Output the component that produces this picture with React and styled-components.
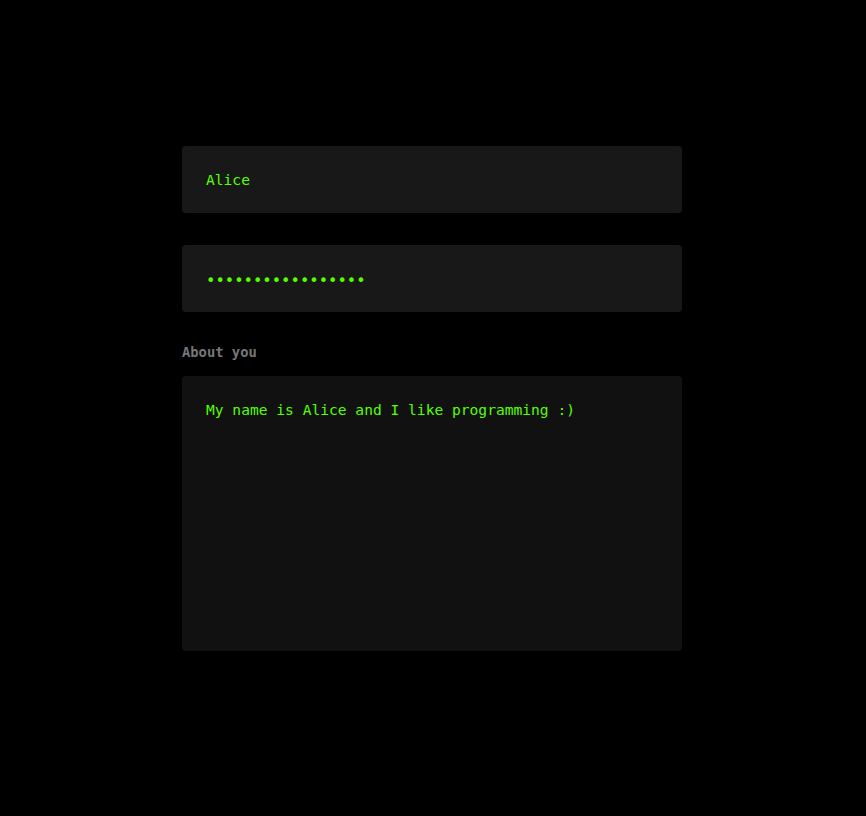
import React, { useState } from "react";
import styled, { createGlobalStyle } from "styled-components";

const GlobalStyle = createGlobalStyle`
  html, body {
    margin: 0;
    padding: 0;
    background-color: #000;
  }
`;

const Page = styled.div`
  min-height: 816px;
  background-color: #000;
  padding: 146px 2px 0 0;
  box-sizing: border-box;
`;

const Form = styled.form`
  width: 500px;
  margin: 0 auto;
  display: flex;
  flex-direction: column;
`;

const Field = styled.input`
  box-sizing: border-box;
  width: 100%;
  height: 67px;
  padding: ${(p) => (p.$secret ? "4px 24px 0" : "0 24px")};
  margin-bottom: ${(p) => p.$gap || 0}px;
  border: none;
  border-radius: 4px;
  outline: none;
  background-color: #181818;
  color: #55ff00;
  font-family: "DejaVu Sans Mono", monospace;
  font-size: ${(p) => (p.$secret ? 15.6 : 14.6)}px;
`;

const Label = styled.label`
  margin: 31px 0 15px;
  color: #777;
  font-family: "DejaVu Sans Mono", monospace;
  font-weight: bold;
  font-size: 13.8px;
  line-height: 18px;
`;

const TextArea = styled.textarea`
  box-sizing: border-box;
  width: 100%;
  height: 275px;
  padding: 25px 24px 24px;
  border: none;
  border-radius: 4px;
  outline: none;
  resize: none;
  background-color: #111;
  color: #55ff00;
  font-family: "DejaVu Sans Mono", monospace;
  font-size: 14.6px;
  line-height: 18px;
`;

function App() {
  const [name, setName] = useState("Alice");
  const [password, setPassword] = useState("sup3rs3cretpassw0");
  const [about, setAbout] = useState("My name is Alice and I like programming :)");

  return (
    <Page>
      <GlobalStyle />
      <Form onSubmit={(e) => e.preventDefault()}>
        <Field
          type="text"
          value={name}
          $gap={32}
          onChange={(e) => setName(e.target.value)}
        />
        <Field
          type="password"
          value={password}
          $secret
          onChange={(e) => setPassword(e.target.value)}
        />
        <Label htmlFor="about">About you</Label>
        <TextArea
          id="about"
          value={about}
          onChange={(e) => setAbout(e.target.value)}
        />
      </Form>
    </Page>
  );
}

export default App;
